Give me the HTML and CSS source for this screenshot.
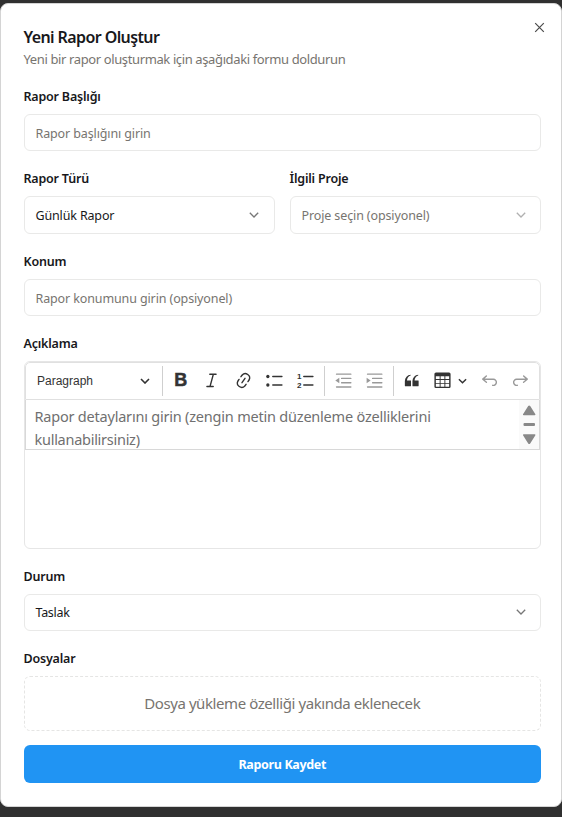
FILE: index.html
```html
<!DOCTYPE html>
<html lang="tr">
<head>
<meta charset="utf-8">
<title>Yeni Rapor Oluştur</title>
<link rel="stylesheet" href="styles.css">
</head>
<body>
<main class="dialog">
  <button class="close" aria-label="Kapat"><svg width="11" height="11" viewBox="0 0 11 11"><path d="M1.2 1.2l8.6 8.6M9.8 1.2l-8.6 8.6"/></svg></button>
  <header>
    <h1><span>Yeni Rapor Oluştur</span></h1>
    <p class="subtitle"><span>Yeni bir rapor oluşturmak için aşağıdaki formu doldurun</span></p>
  </header>
  <form class="form">
    <div class="field">
      <label>Rapor Başlığı</label>
      <div class="control hint"><span>Rapor başlığını girin</span></div>
    </div>
    <div class="pair">
      <div class="field">
        <label>Rapor Türü</label>
        <div class="control tall select first"><span>Günlük Rapor</span><svg class="chev" width="10" height="6" viewBox="0 0 10 6"><path d="M.8.8L5 5 9.2.8"/></svg></div>
      </div>
      <div class="field">
        <label>İlgili Proje</label>
        <div class="control tall select hint"><span>Proje seçin (opsiyonel)</span><svg class="chev faint" width="10" height="6" viewBox="0 0 10 6"><path d="M.8.8L5 5 9.2.8"/></svg></div>
      </div>
    </div>
    <div class="field">
      <label>Konum</label>
      <div class="control hint"><span>Rapor konumunu girin (opsiyonel)</span></div>
    </div>
    <div class="field">
      <label>Açıklama</label>
      <div class="editor">
        <div class="toolbar">
          <div class="heading"><span>Paragraph</span><svg class="tchev" width="10" height="6" viewBox="0 0 10 6"><path d="M1 1l4 4 4-4"/></svg></div>
          <i class="sep"></i>
          <div class="tool bold">B</div>
          <div class="tool"><svg viewBox="0 0 20 20"><path class="line thin" d="M8.2 3.5h6.6M5.2 16.4h6.600M11.900 3.500L8.400 16.400"/></svg></div>
          <div class="tool"><svg viewBox="0 0 20 20"><path d="m11.077 15 .991-1.416a.75.75 0 1 1 1.229.86l-1.148 1.64a.748.748 0 0 1-.217.206 5.251 5.251 0 0 1-8.503-5.955.741.741 0 0 1 .12-.274l1.147-1.639a.75.75 0 1 1 1.228.86L4.933 10.7l.006.003a3.75 3.75 0 0 0 6.132 4.294l.006.004zm5.494-5.335a.748.748 0 0 1-.12.274l-1.147 1.639a.75.75 0 1 1-1.228-.86l.86-1.23a3.75 3.75 0 0 0-6.144-4.301l-.86 1.229a.75.75 0 0 1-1.229-.86l1.148-1.64a.748.748 0 0 1 .217-.206 5.251 5.251 0 0 1 8.503 5.955zm-4.563-2.532a.75.75 0 0 1 .184 1.045l-3.155 4.505a.75.75 0 1 1-1.229-.86l3.155-4.506a.75.75 0 0 1 1.045-.184z"/></svg></div>
          <div class="tool"><svg viewBox="0 0 20 20"><path class="line" d="M8.2 5.75h9.6M8.2 14.75h9.6"/><circle cx="3" cy="5.75" r="1.75"/><circle cx="3" cy="14.75" r="1.75"/></svg></div>
          <div class="tool"><svg viewBox="0 0 20 20"><path class="line" d="M8.2 5.75h9.6M8.2 14.75h9.6"/><text x="1" y="8.5">1</text><text x="1" y="18">2</text></svg></div>
          <i class="sep"></i>
          <div class="tool off"><svg viewBox="0 0 20 20"><path class="line" d="M2.7 3.3h15M8 7.8h9.7M8 12.3h9.7M2.7 16.8h15"/><path d="M5.6 7v6L1.4 10z"/></svg></div>
          <div class="tool off"><svg viewBox="0 0 20 20"><path class="line" d="M2.7 3.3h15M8 7.8h9.7M8 12.3h9.7M2.7 16.8h15"/><path d="M1.7 7v6l4.2-3z"/></svg></div>
          <i class="sep"></i>
          <div class="tool"><svg viewBox="0 0 20 20"><path d="M3 10.423a6.5 6.5 0 0 1 6.056-6.408l.038.67C6.448 5.423 5.354 7.663 5.22 10H9c.552 0 .5.432.5.986v4.511c0 .554-.448.503-1 .503h-5c-.552 0-.5-.449-.5-1.003v-4.574zm8 0a6.5 6.5 0 0 1 6.056-6.408l.038.67c-2.646.739-3.74 2.979-3.873 5.315H17c.552 0 .5.432.5.986v4.511c0 .554-.448.503-1 .503h-5c-.552 0-.5-.449-.5-1.003v-4.574z"/></svg></div>
          <div class="tool table"><svg viewBox="0 0 20 20"><path d="M3 5.5v3h4v-3H3Zm0 4v3h4v-3H3Zm0 4v3h4v-3H3Zm5 3h4v-3H8v3Zm5 0h4v-3h-4v3Zm4-4v-3h-4v3h4Zm0-4v-3h-4v3h4Zm1.5 8A1.5 1.5 0 0 1 17 18H3a1.5 1.5 0 0 1-1.5-1.5V3c.222-.863 1.068-1.5 2-1.5h13c.932 0 1.778.637 2 1.5v13.5Zm-6.5-4v-3H8v3h4Zm0-4v-3H8v3h4Z"/></svg><svg class="tchev" viewBox="0 0 10 6"><path d="M1 1l4 4 4-4"/></svg></div>
          <div class="tool off"><svg viewBox="0 0 20 20"><path d="m5.042 9.367 2.189 1.837a.75.75 0 0 1-.965 1.149l-3.788-3.18a.747.747 0 0 1-.21-.284.75.75 0 0 1 .17-.945L6.23 4.762a.75.75 0 1 1 .964 1.15L4.863 7.866h8.917A.75.75 0 0 1 14 7.9a4 4 0 1 1-1.477 7.718l.344-1.489a2.5 2.5 0 1 0 1.094-4.73l.008-.032H5.042z"/></svg></div>
          <div class="tool off"><svg class="flip" viewBox="0 0 20 20"><path d="m5.042 9.367 2.189 1.837a.75.75 0 0 1-.965 1.149l-3.788-3.18a.747.747 0 0 1-.21-.284.75.75 0 0 1 .17-.945L6.23 4.762a.75.75 0 1 1 .964 1.15L4.863 7.866h8.917A.75.75 0 0 1 14 7.9a4 4 0 1 1-1.477 7.718l.344-1.489a2.5 2.5 0 1 0 1.094-4.73l.008-.032H5.042z"/></svg></div>
        </div>
        <div class="content">
          <p><span>Rapor detaylarını girin (zengin metin düzenleme özelliklerini</span><br><span class="last">kullanabilirsiniz)</span></p>
          <svg class="scroll" width="20" height="49" viewBox="0 0 20 49"><path d="M4 14.200L9.200 6q1-1.200 2 0l5.200 8.200q.3 1-.8 1H4.800q-1.100 0-.8-1zM4 35.300L9.200 43.500q1 1.200 2 0l5.200-8.200q.3-1-.8-1H4.800q-1.100 0-.8 1z"/><rect x="4.500" y="23" width="11.500" height="3" rx="1"/></svg>
        </div>
      </div>
    </div>
    <div class="field">
      <label>Durum</label>
      <div class="control select status"><span>Taslak</span><svg class="chev" width="10" height="6" viewBox="0 0 10 6"><path d="M.8.8L5 5 9.2.8"/></svg></div>
    </div>
    <div class="field">
      <label>Dosyalar</label>
      <div class="drop"><span>Dosya yükleme özelliği yakında eklenecek</span></div>
    </div>
  </form>
  <button class="save"><span>Raporu Kaydet</span></button>
</main>
</body>
</html>
```

FILE: styles.css
```css
* { box-sizing: border-box; }
body {
  margin: 0;
  height: 817px;
  padding-top: 3px;
  overflow: hidden;
  background: #303030;
  font-family: "Noto Sans", "Open Sans", sans-serif;
  color: #18181b;
}
.dialog {
  position: relative;
  height: 804px;
  padding: 22px 20px 0 22.5px;
  background: #fff;
  border: 1px solid #d4d4d4;
  border-radius: 8px;
}
.dialog, .dialog * { white-space: nowrap; }
button { border: 0; padding: 0; font: inherit; }
svg { display: block; flex: none; }
.close {
  position: absolute;
  right: 16px;
  top: 18px;
  background: none;
}
.close path { stroke: #4b4b4b; stroke-width: 1.2; fill: none; }
h1 {
  margin: 0;
  font-size: 16px;
  line-height: 22px;
  font-weight: 600;
  letter-spacing: -0.6px;
}
.subtitle {
  margin: 0;
  font-size: 13px;
  line-height: 22px;
  letter-spacing: -0.38px;
  color: #77746f;
}
.form { display: grid; gap: 19px; margin-top: 18px; }
.field { display: grid; gap: 8px; }
label {
  height: 18px;
  font-size: 12.5px;
  line-height: 18px;
  font-weight: 600;
  letter-spacing: -0.2px;
}
.pair { display: grid; grid-template-columns: 251px 251px; gap: 15px; }
.control {
  height: 37px;
  display: flex;
  align-items: center;
  justify-content: space-between;
  padding: 1px 14px 0 11px;
  border: 1px solid #e9e9e8;
  border-radius: 6px;
  font-size: 12.5px;
  letter-spacing: -0.12px;
}
.tall { height: 38px; }
.first { padding-right: 15px; letter-spacing: -0.15px; }
.status { padding-top: 0; letter-spacing: -0.3px; }
.status .chev { margin-top: -1px; }
.hint { color: #77746f; }
.chev { margin-top: -2px; }
.chev path { fill: none; stroke: #777; stroke-width: 1.3; }
.chev.faint path { stroke: #b0b0b0; }
.editor {
  height: 188px;
  border: 1px solid #e6e6e6;
  border-radius: 6px;
  overflow: hidden;
}
.toolbar {
  height: 38px;
  display: flex;
  align-items: center;
  padding-bottom: 1px;
  border: 1px solid #e0e0e0;
  border-radius: 5px 5px 0 0;
}
.heading {
  width: 136px;
  padding: 0 12px 0 11.5px;
  display: flex;
  align-items: center;
  justify-content: space-between;
  font: 12px "Liberation Sans", sans-serif;
  color: #333;
}
.tchev { width: 10px; height: 6px; }
.tool .tchev { width: 9px; height: 6px; margin-left: 6px; }
.tchev path { fill: none; stroke: #333; stroke-width: 1.6; }
.sep { width: 1px; height: 30px; margin: 0 2.5px; background: #cfcfcf; }
.heading + .sep { margin-left: 0; }
.tool {
  width: 31.3px;
  display: flex;
  align-items: center;
  justify-content: center;
  color: #333;
  fill: currentColor;
}
.tool svg:not(.tchev) { width: 19px; height: 19px; }
.tool text { font: bold 8.5px "Liberation Sans", sans-serif; }
.table { width: 46px; }
.bold { font: bold 18px "Liberation Sans", sans-serif; -webkit-text-stroke: 0.5px #333; }
.line { fill: none; stroke: currentColor; stroke-width: 1.5; stroke-linecap: round; }
.thin { stroke-width: 1.5; }
.off { color: #999; }
.flip { transform: scaleX(-1); }
.content {
  height: 50px;
  display: flex;
  justify-content: space-between;
  padding-left: 9px;
  border: 1px solid #d8d8d8;
  border-top: 0;
}
.content p {
  margin: 5px 0 0;
  font-size: 14.5px;
  line-height: 23px;
  color: #707070;
  letter-spacing: -0.21px;
}
.last { letter-spacing: -0.27px; }
.scroll { background: #fafafa; fill: #888; }
.drop {
  height: 55px;
  display: flex;
  align-items: center;
  justify-content: center;
  padding-bottom: 2px;
  border: 1px dashed #e5e5e4;
  border-radius: 6px;
  font-size: 15px;
  letter-spacing: -0.42px;
  color: #77746f;
}
.save {
  width: 100%;
  height: 38px;
  margin-top: 13.5px;
  padding-top: 1px;
  border-radius: 6px;
  background: #2094f3;
  color: #fff;
  font-size: 12.5px;
  font-weight: 700;
  letter-spacing: -0.35px;
}
```
